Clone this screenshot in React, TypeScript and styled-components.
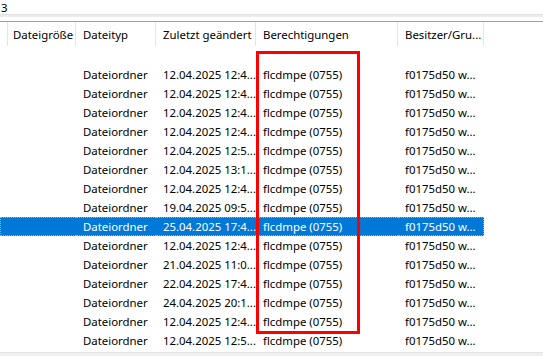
import styled, { createGlobalStyle } from 'styled-components';

const GlobalStyle = createGlobalStyle`
  body {
    margin: 0;
    background: #ffffff;
    font-family: "Noto Sans", "Open Sans", sans-serif;
    font-size: 11.4px;
    color: #000000;
  }
`;

const Window = styled.div`
  position: relative;
  width: 543px;
  height: 356px;
  overflow: hidden;
  background: #ffffff;
`;

const PathBar = styled.div`
  height: 14px;
  display: flex;
  align-items: center;
  padding-left: 1px;
  white-space: nowrap;
`;

const Splitter = styled.div`
  height: 3px;
  background: #ececec;
  border-top: 1px solid #e0e0e0;
  box-sizing: border-box;
`;

const ListFrame = styled.div`
  margin-top: 4px;
  border-top: 1px solid #a0a0a0;
`;

const Row = styled.div<{ $header?: boolean }>`
  display: grid;
  grid-template-columns: 3px 73px 80px 100px 142px 86px 1fr;
  height: ${(p) => (p.$header ? '24px' : '19px')};
  align-items: center;
  white-space: nowrap;
`;

const Cell = styled.div<{ $header?: boolean; $selected?: boolean; $first?: boolean; $last?: boolean }>`
  height: 100%;
  display: flex;
  align-items: center;
  padding-left: 7px;
  overflow: hidden;
  box-sizing: border-box;
  background: ${(p) => (p.$selected ? '#0078d7' : 'transparent')};
  color: ${(p) => (p.$selected ? '#ffffff' : '#000000')};
  border-right: ${(p) => (p.$header ? '1px solid #e5e5e5' : 'none')};
  border-top: ${(p) => (p.$selected ? '1px dotted #f0a040' : 'none')};
  border-bottom: ${(p) => (p.$selected ? '1px dotted #f0a040' : 'none')};
  ${(p) => (p.$selected && p.$last ? 'border-right: 1px dotted #f0a040;' : '')}
  ${(p) => (p.$selected && p.$first ? 'border-left: 1px dotted #f0a040;' : '')}
`;

const SizeHead = styled(Cell)`
  padding-left: 10px;
`;

const Highlight = styled.div`
  position: absolute;
  left: 256px;
  top: 51px;
  width: 104px;
  height: 283px;
  border: 3px solid #ff0000;
  box-sizing: border-box;
  pointer-events: none;
`;

const BottomEdge = styled.div`
  position: absolute;
  left: 0;
  right: 0;
  bottom: 0;
  height: 3px;
  background: #f0f0f0;
  border-top: 1px solid #e3e3e3;
`;

const dates = [
  '12.04.2025 12:4...',
  '12.04.2025 12:4...',
  '12.04.2025 12:4...',
  '12.04.2025 12:4...',
  '12.04.2025 12:5...',
  '12.04.2025 13:1...',
  '12.04.2025 12:4...',
  '19.04.2025 09:5...',
  '25.04.2025 17:4...',
  '12.04.2025 12:4...',
  '21.04.2025 11:0...',
  '22.04.2025 17:4...',
  '24.04.2025 20:1...',
  '12.04.2025 12:4...',
  '12.04.2025 12:5...',
];

const App = () => {
  return (
    <Window>
      <GlobalStyle />
      <PathBar>3</PathBar>
      <Splitter />
      <ListFrame>
        <Row $header>
          <Cell $header />
          <SizeHead $header>Dateigröße</SizeHead>
          <Cell $header>Dateityp</Cell>
          <Cell $header>Zuletzt geändert</Cell>
          <Cell $header>Berechtigungen</Cell>
          <Cell $header>Besitzer/Gru...</Cell>
          <div />
        </Row>
        <Row />
        {dates.map((d, i) => {
          const sel = i === 8;
          return (
            <Row key={i}>
              <Cell $selected={sel} $first />
              <Cell $selected={sel} />
              <Cell $selected={sel}>Dateiordner</Cell>
              <Cell $selected={sel}>{d}</Cell>
              <Cell $selected={sel}>flcdmpe (0755)</Cell>
              <Cell $selected={sel} $last>f0175d50 w...</Cell>
              <div />
            </Row>
          );
        })}
      </ListFrame>
      <Highlight />
      <BottomEdge />
    </Window>
  );
};

export default App;
